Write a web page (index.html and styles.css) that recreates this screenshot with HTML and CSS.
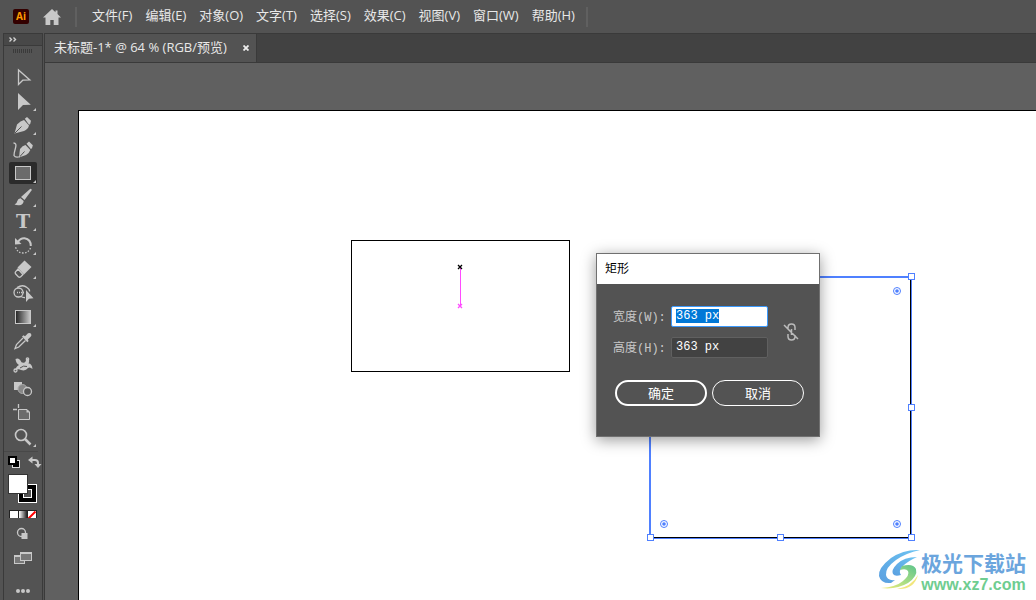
FILE: index.html
```html
<!DOCTYPE html>
<html lang="zh-CN">
<head>
    <meta charset="UTF-8">
    <meta name="viewport" content="width=device-width, initial-scale=1.0">
    <title>未标题-1*</title>
    <link rel="stylesheet" href="styles.css">
</head>
<body>
    <header class="menubar">
        <span class="app-logo">Ai</span>
        <button class="home-btn" aria-label="主页">
            <svg width="18" height="16" viewBox="0 0 18 16"><path d="M9 0 0 8.5h2.5V16h4.8v-5h3.4v5h4.8V8.5H18L14.5 5V1.5h-2v1.7z" fill="#c8c8c8"/></svg>
        </button>
        <nav class="menu">
            <button>文件(F)</button>
            <button>编辑(E)</button>
            <button>对象(O)</button>
            <button>文字(T)</button>
            <button>选择(S)</button>
            <button>效果(C)</button>
            <button>视图(V)</button>
            <button>窗口(W)</button>
            <button>帮助(H)</button>
        </nav>
    </header>

    <div class="workspace">
        <aside class="toolbar">
            <button class="toolbar-head" aria-label="展开">
                <svg width="8" height="5" viewBox="0 0 8 5"><path d="M.5.5l2 2-2 2M4.5.5l2 2-2 2" fill="none" stroke="#d0d0d0" stroke-width="1.4"/></svg>
            </button>
            <div class="grip"></div>

            <div class="tools">
                <button class="tool" aria-label="选择工具">
                    <svg viewBox="0 0 28 22"><path d="M9.5 4v14.5l4.3-4.3 7-.2z" class="line"/></svg>
                </button>
                <button class="tool more" aria-label="直接选择工具">
                    <svg viewBox="0 0 28 22"><path d="M9 3v17l5-5 7.8-.3z" class="solid"/></svg>
                </button>
                <button class="tool more" aria-label="钢笔工具">
                    <svg viewBox="0 0 28 22">
                        <path d="M5.5 19.5 8 10.500Q11.500 6.500 15 6l5 5.500Q19 15 15 17z" class="solid"/>
                        <path d="M15.800 4.800 18 3l4 3.800-.8 3.200-1.200.8z" class="solid"/>
                        <path d="M6 19l6.500-6.500" class="cut"/>
                    </svg>
                </button>
                <button class="tool" aria-label="曲率工具">
                    <svg viewBox="0 0 28 22">
                        <path d="M10 19.500 11 11Q13.500 7.500 16.500 7l4.800 5Q20 15.500 17 17z" class="solid"/>
                        <path d="M17.500 5.800 20 3.500l3.800 3.800-.8 3-1.200.8z" class="solid"/>
                        <path d="M10.500 19l5-5.500" class="cut"/>
                        <path d="M4.500 5Q8 5 6.500 10T5 17.500q1.500 2.500 6 1" class="line"/>
                    </svg>
                </button>
                <button class="tool more active" aria-label="矩形工具">
                    <svg viewBox="0 0 28 22"><rect x="6.500" y="4.500" width="15" height="13" fill="#6b6b6b" stroke="#c8c8c8"/></svg>
                </button>
                <button class="tool more" aria-label="画笔工具">
                    <svg viewBox="0 0 28 22">
                        <path d="M21 3q2.200-.8 1.500 1.500L15.500 14 12 11z" class="solid"/>
                        <path d="M11.500 12.200l3.200 2.700q-.5 4-4.500 4.300-2.500.2-4.700-.7 2.500-.8 2.700-3.200.6-2.700 3.300-3.100z" class="solid"/>
                    </svg>
                </button>
                <button class="tool more type-tool" aria-label="文字工具">T</button>
                <button class="tool more" aria-label="旋转工具">
                    <svg viewBox="0 0 28 22">
                        <path d="M9 8Q11.500 4 15.500 4.300 22 5.500 21.800 12" class="line thick"/>
                        <path d="M6 4v6.500l6.500-.5z" class="solid"/>
                        <path d="M21.500 14q-2 5-7.500 5t-7.500-6" class="line" stroke-dasharray="1.500 1.500"/>
                    </svg>
                </button>
                <button class="tool more" aria-label="橡皮擦工具">
                    <svg viewBox="0 0 28 22">
                        <path d="M15.500 2.500 22.500 9l-7.500 7.500-6.500-7z" class="solid"/>
                        <path d="M9 11l5 5.500-2.500 2.500q-1 .5-2 0l-3-3.200q-.7-1 0-2z" class="line"/>
                    </svg>
                </button>
                <button class="tool" aria-label="形状生成器工具">
                    <svg viewBox="0 0 28 22">
                        <circle cx="9.500" cy="10.500" r="4.500" class="line"/>
                        <path d="M8 5.500q6-3.500 10 0 3 2 2.500 4M12 14.500q2 1.300 4 1" class="line"/>
                        <path d="M8 10.500h8" class="line" stroke-dasharray="1 1"/>
                        <path d="M17 8v12l3-3.300 4.500-.4z" class="solid"/>
                    </svg>
                </button>
                <button class="tool more" aria-label="渐变工具">
                    <svg viewBox="0 0 28 22">
                        <defs><linearGradient id="grad"><stop offset="0" stop-color="#222"/><stop offset="1" stop-color="#ccc"/></linearGradient></defs>
                        <rect x="6.500" y="4.500" width="15" height="13" fill="url(#grad)" stroke="#c8c8c8"/>
                    </svg>
                </button>
                <button class="tool" aria-label="吸管工具">
                    <svg viewBox="0 0 28 22">
                        <path d="M14 8l-6.500 6.500-1.500 4 3.800-1.500 6.700-6.500" class="line"/>
                        <path d="M13 6.500l1.500-1.200 1.500 1 3-3q2-1 3 .4 1 1.500-.2 2.800l-3 3 .8 1.500-1.300 1.300z" class="solid"/>
                    </svg>
                </button>
                <button class="tool" aria-label="操控变形工具">
                    <svg viewBox="0 0 28 22">
                        <path d="M6.500 5q3-1.500 5 1.500.7 2.500 3 2.300 2.500-.3 2.500-3.300l2-1q2 2 .5 5 3.500 0 4 5.500-2.500-2.500-4.500-1-2.500 3.500-7 2-3-1.500-5.500.5 0-4 3.500-5.500-3-1.500-3.500-6z" class="solid"/>
                        <path d="M11 14q3.500-3 7-1.500" class="cut"/>
                        <circle cx="6.500" cy="16.500" r="1.500" class="line"/>
                        <circle cx="18.500" cy="5" r="1.200" class="line"/>
                    </svg>
                </button>
                <button class="tool" aria-label="混合工具">
                    <svg viewBox="0 0 28 22">
                        <rect x="5" y="4" width="8" height="8" class="solid"/>
                        <circle cx="13.500" cy="11" r="4.500" fill="#888" stroke="#aaa"/>
                        <circle cx="18.500" cy="13.500" r="4" fill="#535353" stroke="#c8c8c8" stroke-width="1.300"/>
                    </svg>
                </button>
                <button class="tool" aria-label="画板工具">
                    <svg viewBox="0 0 28 22">
                        <path d="M9.500 7.500H18l2.500 2.500v7.500h-11z" fill="#6b6b6b" stroke="#c8c8c8"/>
                        <path d="M17.500 7v3.500H21z" class="solid"/>
                        <path d="M9.500 2v4M4 7.500h4" class="line"/>
                    </svg>
                </button>
                <button class="tool more" aria-label="缩放工具">
                    <svg viewBox="0 0 28 22">
                        <circle cx="12" cy="9" r="5.500" class="line lens"/>
                        <path d="M16 13l5.500 5.500" class="line handle"/>
                    </svg>
                </button>
            </div>

            <div class="colors">
                <svg width="38" height="66" viewBox="0 0 38 66">
                    <!-- default colours and swap arrow -->
                    <rect x="8.500" y="8.500" width="7" height="7" fill="#000" stroke="#ddd"/>
                    <rect x="5" y="5" width="7" height="7" fill="#fff" stroke="#000" stroke-width="2"/>
                    <path d="M27 8h4q3 0 3 3v2" fill="none" stroke="#c8c8c8" stroke-width="2"/>
                    <path d="M24 8l4.500-3.500v7zM30.500 12h7L34 16z" class="solid"/>
                    <!-- stroke swatch behind fill swatch -->
                    <rect x="14.500" y="32.500" width="18" height="18" fill="#000" stroke="#fff"/>
                    <rect x="19.500" y="37.500" width="8" height="8" fill="#535353" stroke="#fff"/>
                    <rect x="4.500" y="22.500" width="19" height="19" fill="#fff" stroke="#333"/>
                    <!-- colour, gradient, none -->
                    <defs><linearGradient id="mode"><stop offset="0" stop-color="#fff"/><stop offset="1" stop-color="#222"/></linearGradient></defs>
                    <rect x="5" y="58" width="28" height="10" fill="#222"/>
                    <rect x="6" y="59" width="8" height="8" fill="#fff"/>
                    <rect x="15" y="59" width="8" height="8" fill="url(#mode)"/>
                    <rect x="24" y="59" width="8" height="8" fill="#fff"/>
                    <path d="M24.500 66.500l7-7" stroke="#f00" stroke-width="2"/>
                </svg>
            </div>
            <button class="mode-btn" aria-label="绘图模式">
                <svg width="28" height="22" viewBox="0 0 28 22"><circle cx="12.500" cy="9.500" r="4" class="line"/><rect x="12.500" y="10" width="6" height="6" class="solid"/></svg>
            </button>
            <button class="mode-btn" aria-label="屏幕模式">
                <svg width="28" height="22" viewBox="0 0 28 22">
                    <rect x="5.500" y="8.500" width="10" height="8" fill="#777" stroke="#c8c8c8"/>
                    <rect x="11.500" y="5.500" width="11" height="8" fill="#777" stroke="#c8c8c8"/>
                    <path d="M5 9h6M11 6h12" stroke="#c8c8c8" stroke-width="2"/>
                </svg>
            </button>
            <button class="mode-btn dots" aria-label="编辑工具栏">
                <svg width="28" height="22" viewBox="0 0 28 22"><circle cx="9" cy="11" r="2" class="solid"/><circle cx="14" cy="11" r="2" class="solid"/><circle cx="19" cy="11" r="2" class="solid"/></svg>
            </button>
        </aside>

        <main class="document">
            <div class="tabs">
                <div class="tab">
                    <span>未标题-1* @ 64 % (RGB/预览)</span>
                    <button class="tab-close" aria-label="关闭">
                        <svg width="6" height="6" viewBox="0 0 6 6"><path d="M.5.5l5 5M5.500.5l-5 5" stroke="#eee" stroke-width="1.800"/></svg>
                    </button>
                </div>
            </div>

            <div class="canvas">
                <div class="artboard">
                    <svg class="artwork">
                        <rect x="272.500" y="129.500" width="218" height="131" fill="none" stroke="#000"/>
                        <!-- smart guide -->
                        <path d="M381.500 157v38" stroke="#ff4bff"/>
                        <path d="M379 154l4 4M383 154l-4 4" stroke="#000" stroke-width="1.300"/>
                        <path d="M379 193l4 4M383 193l-4 4" stroke="#ff4bff" stroke-width="1.300"/>
                        <!-- selected rectangle -->
                        <path d="M571 166h261M571 166v261" stroke="#4f80ff" stroke-width="2" fill="none"/>
                        <path d="M831.500 167v259.500H571" stroke="#000" fill="none"/>
                        <path d="M832.500 167v260.500H571" stroke="#4f80ff" fill="none"/>
                        <g fill="#fff" stroke="#4f80ff">
                            <rect x="829.500" y="162.500" width="6" height="6"/>
                            <rect x="829.500" y="293.500" width="6" height="6"/>
                            <rect x="829.500" y="423.500" width="6" height="6"/>
                            <rect x="698.500" y="423.500" width="6" height="6"/>
                            <rect x="568.500" y="423.500" width="6" height="6"/>
                        </g>
                        <g fill="#fff" stroke="#4f80ff">
                            <circle cx="818" cy="180" r="3.500"/>
                            <circle cx="818" cy="413" r="3.500"/>
                            <circle cx="585" cy="413" r="3.500"/>
                        </g>
                        <g fill="#4f80ff">
                            <circle cx="818" cy="180" r="1.800"/>
                            <circle cx="818" cy="413" r="1.800"/>
                            <circle cx="585" cy="413" r="1.800"/>
                        </g>
                    </svg>

                    <form class="dialog" role="dialog" aria-labelledby="dialogTitle">
                        <h1 class="dialog-title" id="dialogTitle">矩形</h1>
                        <div class="dialog-body">
                            <div class="size-row">
                                <div class="fields">
                                    <label for="widthInput">宽度(W):</label>
                                    <input type="text" id="widthInput" value="363 px">
                                    <label for="heightInput">高度(H):</label>
                                    <input type="text" id="heightInput" value="363 px">
                                </div>
                                <button type="button" class="link-btn" aria-label="约束比例">
                                    <svg width="16" height="18" viewBox="0 0 16 18"><path d="M5 6V4.500q0-3.500 3.500-3.500T12 4.500V7M8.500 6v6M5 11v2.500Q5 17 8.500 17t3.500-3.500V12M1 2l14 14" fill="none" stroke="#bbb" stroke-width="1.500"/></svg>
                                </button>
                            </div>
                            <div class="buttons">
                                <button type="button" class="btn primary">确定</button>
                                <button type="button" class="btn">取消</button>
                            </div>
                        </div>
                    </form>
                </div>
            </div>
        </main>
    </div>

    <div class="watermark">
        <svg width="44" height="44" viewBox="0 0 44 44">
            <defs>
                <linearGradient id="wmBlue" x1="0" y1="1" x2="1" y2="0"><stop offset="0" stop-color="#5a9fe0"/><stop offset="1" stop-color="#6cc4f2"/></linearGradient>
                <linearGradient id="wmGreen" x1="0" y1="1" x2="1" y2="0"><stop offset="0" stop-color="#f4ec7a"/><stop offset=".5" stop-color="#a5dc85"/><stop offset="1" stop-color="#5cc48c"/></linearGradient>
            </defs>
            <path d="M43 2Q27 1 14 10 1 20 2 28q2 8 12 7l4-3q-8 1-9-5-1-7 10-15Q29 5 43 2z" fill="url(#wmBlue)"/>
            <path d="M40 9Q27 9 20 16q-6 6-4 10 2 3 8 1-3-4 2-9 5-5 14-9z" fill="url(#wmBlue)"/>
            <path d="M25 18q11-3 14 3 2 7-8 14-12 7-27 5 15-1 22-7 7-6 5-10-2-3-8-1z" fill="url(#wmGreen)"/>
            <path d="M20 41q14-2 21-14-4 15-21 14z" fill="#f2e67c"/>
        </svg>
        <div class="watermark-text">
            <div class="watermark-name">极光下载站</div>
            <div class="watermark-url">www.xz7.com</div>
        </div>
    </div>

    <script src="script.js"></script>
</body>
</html>
```

FILE: styles.css
```css
* {
    box-sizing: border-box;
}
body {
    margin: 0;
    height: 100vh;
    display: flex;
    flex-direction: column;
    overflow: hidden;
    background-color: #535353;
    color: #e8e8e8;
    font-family: "Open Sans", "Noto Sans CJK SC", sans-serif;
    font-size: 12px;
}
button {
    margin: 0;
    padding: 0;
    border: none;
    background: none;
    color: inherit;
    font: inherit;
}
svg {
    display: block;
}

/* menu bar */
.menubar {
    display: flex;
    align-items: center;
    height: 33px;
    padding-left: 13px;
    flex-shrink: 0;
}
.app-logo {
    width: 16px;
    height: 15px;
    border-radius: 2px;
    background-color: #330000;
    color: #ff9a00;
    font-size: 10px;
    font-weight: bold;
    line-height: 15px;
    text-align: center;
}
.home-btn {
    margin-left: 14px;
}
.menu {
    display: flex;
    align-items: center;
    gap: 13px;
    height: 20px;
    margin-left: 14px;
    padding: 0 11px 3px 15px;
    border-left: 2px solid #606060;
    border-right: 2px solid #606060;
    font-size: 13px;
    line-height: 20px;
    white-space: nowrap;
}

.workspace {
    display: flex;
    flex: 1;
    min-height: 0;
    padding-left: 3px;
}

/* toolbar */
.toolbar {
    width: 40px;
    flex-shrink: 0;
    display: flex;
    flex-direction: column;
    overflow: hidden;
    border: 1px solid #3a3a3a;
    border-bottom: none;
}
.toolbar-head {
    height: 12px;
    flex-shrink: 0;
    padding-left: 5px;
    background-color: #484848;
    border-bottom: 1px solid #3a3a3a;
}
.grip {
    width: 20px;
    height: 4px;
    margin: 3px auto 13px 9px;
    flex-shrink: 0;
    background: repeating-linear-gradient(90deg, #3a3a3a 0 1px, transparent 1px 2px);
}
.tools {
    display: flex;
    flex-direction: column;
    gap: 2px;
    padding: 0 5px 3px;
}
.tool {
    position: relative;
    width: 28px;
    height: 22px;
    border-radius: 2px;
}
.tool.active {
    background-color: #2b2b2b;
}
.tool.more::after {
    content: "";
    position: absolute;
    right: 1px;
    bottom: 1px;
    border-left: 3px solid transparent;
    border-bottom: 3px solid #c8c8c8;
}
.type-tool {
    color: #c8c8c8;
    font-family: "DejaVu Serif", serif;
    font-size: 19px;
    font-weight: bold;
    line-height: 22px;
}
.solid {
    fill: #c8c8c8;
}
.line {
    fill: none;
    stroke: #c8c8c8;
    stroke-width: 1.3;
}
.thick {
    stroke-width: 2;
}
.lens {
    stroke-width: 1.6;
}
.handle {
    stroke-width: 2.5;
}
.cut {
    fill: none;
    stroke: #535353;
}
.colors {
    margin: 0 4px 5px 0;
    border-top: 1px solid #484848;
    flex-shrink: 0;
}
.mode-btn {
    width: 28px;
    height: 22px;
    margin: 0 5px 2px;
    flex-shrink: 0;
}
.dots {
    margin-top: 9px;
}

/* document */
.document {
    flex: 1;
    min-width: 0;
    display: flex;
    flex-direction: column;
    margin-left: 1px;
    border-left: 1px solid #3a3a3a;
    border-top: 1px solid #3a3a3a;
}
.tabs {
    display: flex;
    height: 29px;
    flex-shrink: 0;
    background-color: #424242;
    border-bottom: 1px solid #3a3a3a;
}
.tab {
    display: flex;
    align-items: center;
    gap: 16px;
    padding: 0 7px 0 9px;
    background-color: #535353;
    border-right: 1px solid #3a3a3a;
    font-size: 13px;
    white-space: nowrap;
}
.tab span {
    padding-bottom: 3px;
}
.canvas {
    flex: 1;
    min-height: 0;
    display: flex;
    padding: 47px 0 0 33px;
    background-color: #606060;
}
.artboard {
    position: relative;
    flex: 1;
    background-color: #fff;
    border: 1px solid #000;
    border-right: none;
    border-bottom: none;
}
.artwork {
    width: 100%;
    height: 100%;
}

/* rectangle dialog */
.dialog {
    position: absolute;
    left: 517px;
    top: 142px;
    width: 224px;
    background-color: #535353;
    border: 1px solid #707070;
    box-shadow: 0 3px 14px rgba(0, 0, 0, 0.4);
    font-family: "Liberation Mono", "Noto Sans CJK SC", monospace;
}
.dialog-title {
    margin: 0;
    padding: 0 8px 2px;
    background-color: #fff;
    color: #000;
    font-family: "Noto Sans CJK SC", sans-serif;
    font-size: 12px;
    font-weight: normal;
    line-height: 28px;
}
.dialog-body {
    padding: 22px 15px 30px 16px;
}
.size-row {
    display: flex;
    align-items: center;
    gap: 15px;
}
.fields {
    display: grid;
    grid-template-columns: 54px 97px;
    column-gap: 4px;
    row-gap: 10px;
    align-items: center;
    color: #c8c8c8;
    white-space: nowrap;
}
.fields label {
    height: 21px;
    line-height: 25px;
}
.fields input {
    width: 100%;
    height: 21px;
    padding: 0 4px 2px;
    background-color: #424242;
    border: 1px solid #606060;
    border-radius: 2px;
    color: #fff;
    font: inherit;
    outline: none;
}
.fields input:focus {
    background-color: #fff;
    border-color: #3b99fc;
    color: #000;
}
.fields input::selection {
    background-color: #0078d7;
    color: #fff;
}
.buttons {
    display: flex;
    gap: 5px;
    margin: 22px 0 0 2px;
}
.btn {
    width: 92px;
    height: 26px;
    padding-bottom: 2px;
    border: 1px solid #fff;
    border-radius: 13px;
    color: #fff;
    font-size: 13px;
}
.btn.primary {
    border-width: 2px;
}

/* site mark in the corner */
.watermark {
    position: absolute;
    right: 10px;
    bottom: 7px;
    display: flex;
    align-items: center;
    font-weight: bold;
    white-space: nowrap;
}
.watermark-name {
    color: #6ba5dd;
    font-family: "Noto Sans CJK SC", sans-serif;
    font-size: 21px;
    line-height: 30px;
}
.watermark-url {
    color: #6fcd90;
    font-family: "Liberation Sans", sans-serif;
    font-size: 16px;
    line-height: 16px;
    text-align: center;
}
```

FILE: script.js
```javascript
const widthInput = document.getElementById('widthInput');
widthInput.focus();
widthInput.select();
```
